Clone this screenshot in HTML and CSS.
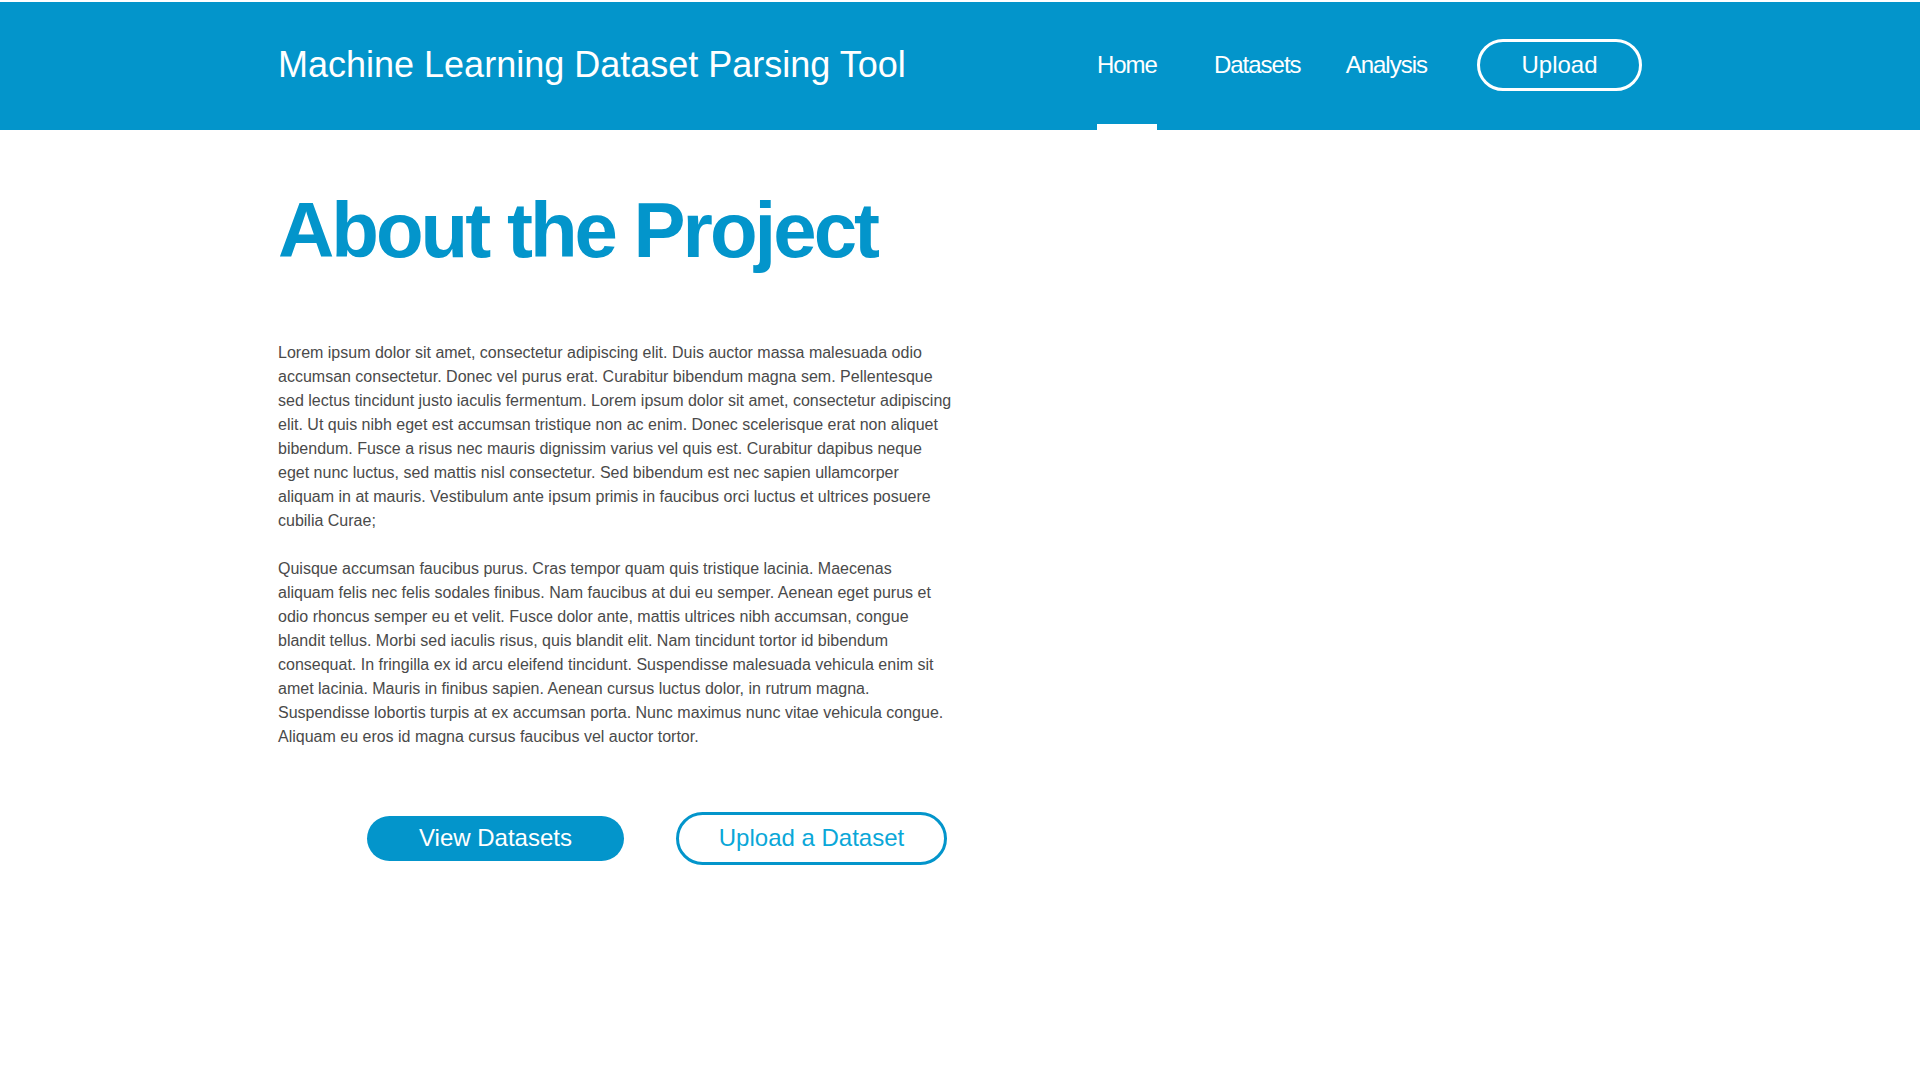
FILE: index.html
```html
<!DOCTYPE html>
<html lang="en">
<head>
<meta charset="utf-8">
<title>Machine Learning Dataset Parsing Tool</title>
<link rel="stylesheet" href="styles.css">
</head>
<body>
<header class="site-header">
  <div class="header-inner">
    <div class="brand">Machine Learning Dataset Parsing Tool</div>
    <nav class="main-nav">
      <a class="nav-link active" href="#">Home</a>
      <a class="nav-link" href="#">Datasets</a>
      <a class="nav-link" href="#">Analysis</a>
      <a class="nav-upload" href="#">Upload</a>
    </nav>
  </div>
</header>
<main class="content">
  <h1 class="page-title">About the Project</h1>
  <div class="text-block">
    <p>Lorem ipsum dolor sit amet, consectetur adipiscing elit. Duis auctor massa malesuada odio accumsan consectetur. Donec vel purus erat. Curabitur bibendum magna sem. Pellentesque sed lectus tincidunt justo iaculis fermentum. Lorem ipsum dolor sit amet, consectetur adipiscing elit. Ut quis nibh eget est accumsan tristique non ac enim. Donec scelerisque erat non aliquet bibendum. Fusce a risus nec mauris dignissim varius vel quis est. Curabitur dapibus neque eget nunc luctus, sed mattis nisl consectetur. Sed bibendum est nec sapien ullamcorper aliquam in at mauris. Vestibulum ante ipsum primis in faucibus orci luctus et ultrices posuere cubilia Curae;</p>
    <p>Quisque accumsan faucibus purus. Cras tempor quam quis tristique lacinia. Maecenas aliquam felis nec felis sodales finibus. Nam faucibus at dui eu semper. Aenean eget purus et odio rhoncus semper eu et velit. Fusce dolor ante, mattis ultrices nibh accumsan, congue blandit tellus. Morbi sed iaculis risus, quis blandit elit. Nam tincidunt tortor id bibendum consequat. In fringilla ex id arcu eleifend tincidunt. Suspendisse malesuada vehicula enim sit amet lacinia. Mauris in finibus sapien. Aenean cursus luctus dolor, in rutrum magna. Suspendisse lobortis turpis at ex accumsan porta. Nunc maximus nunc vitae vehicula congue. Aliquam eu eros id magna cursus faucibus vel auctor tortor.</p>
  </div>
  <div class="actions">
    <a class="btn btn-filled" href="#">View Datasets</a>
    <a class="btn btn-outline" href="#">Upload a Dataset</a>
  </div>
</main>
</body>
</html>
```
FILE: styles.css
```css
* {
  box-sizing: border-box;
}

html, body {
  margin: 0;
  padding: 0;
  background: #ffffff;
}

body {
  font-family: "Liberation Sans", Arial, Helvetica, sans-serif;
  color: #4a4a4a;
  padding-top: 2px;
}

a {
  text-decoration: none;
  color: inherit;
}

.site-header {
  background: #0395cb;
  height: 128px;
}

.header-inner {
  width: 1364px;
  margin: 0 auto;
  height: 100%;
  display: flex;
  align-items: stretch;
  justify-content: space-between;
}

.brand {
  display: flex;
  align-items: center;
  color: #ffffff;
  font-size: 36px;
  padding-bottom: 3px;
}

.main-nav {
  display: flex;
  align-items: stretch;
}

.nav-link {
  display: flex;
  align-items: center;
  color: #ffffff;
  font-size: 24px;
  letter-spacing: -1px;
  margin-right: 48px;
  padding-bottom: 2px;
}

.nav-link.active {
  box-shadow: inset 0 -6px 0 #ffffff;
  margin-right: 57px;
}

.nav-link:nth-child(2) {
  margin-right: 45px;
}

.nav-link:nth-child(3) {
  margin-right: 50px;
}

.nav-upload {
  align-self: center;
  display: flex;
  align-items: center;
  justify-content: center;
  width: 165px;
  height: 52px;
  border: 3px solid #ffffff;
  border-radius: 26px;
  color: #ffffff;
  font-size: 24px;
  margin-bottom: 2px;
}

.content {
  width: 1364px;
  margin: 0 auto;
  padding-top: 54px;
}

.page-title {
  margin: 0;
  font-size: 78px;
  line-height: 1.2;
  font-weight: 700;
  color: #0395cb;
  letter-spacing: -3px;
}

.text-block {
  width: 674px;
  margin-top: 63px;
  font-size: 16px;
  line-height: 24px;
  color: #4a4a4a;
}

.text-block p {
  margin: 0 0 24px 0;
}

.text-block p:last-child {
  margin-bottom: 0;
}

.actions {
  display: flex;
  align-items: center;
  gap: 52px;
  padding-left: 89px;
  margin-top: 63px;
}

.btn {
  display: flex;
  align-items: center;
  justify-content: center;
  font-size: 24px;
  border-radius: 30px;
}

.btn-filled {
  width: 257px;
  height: 45px;
  background: #0395cb;
  color: #ffffff;
}

.btn-outline {
  width: 271px;
  height: 53px;
  border: 3px solid #0395cb;
  color: #0aa7d8;
  background: #ffffff;
}
```
